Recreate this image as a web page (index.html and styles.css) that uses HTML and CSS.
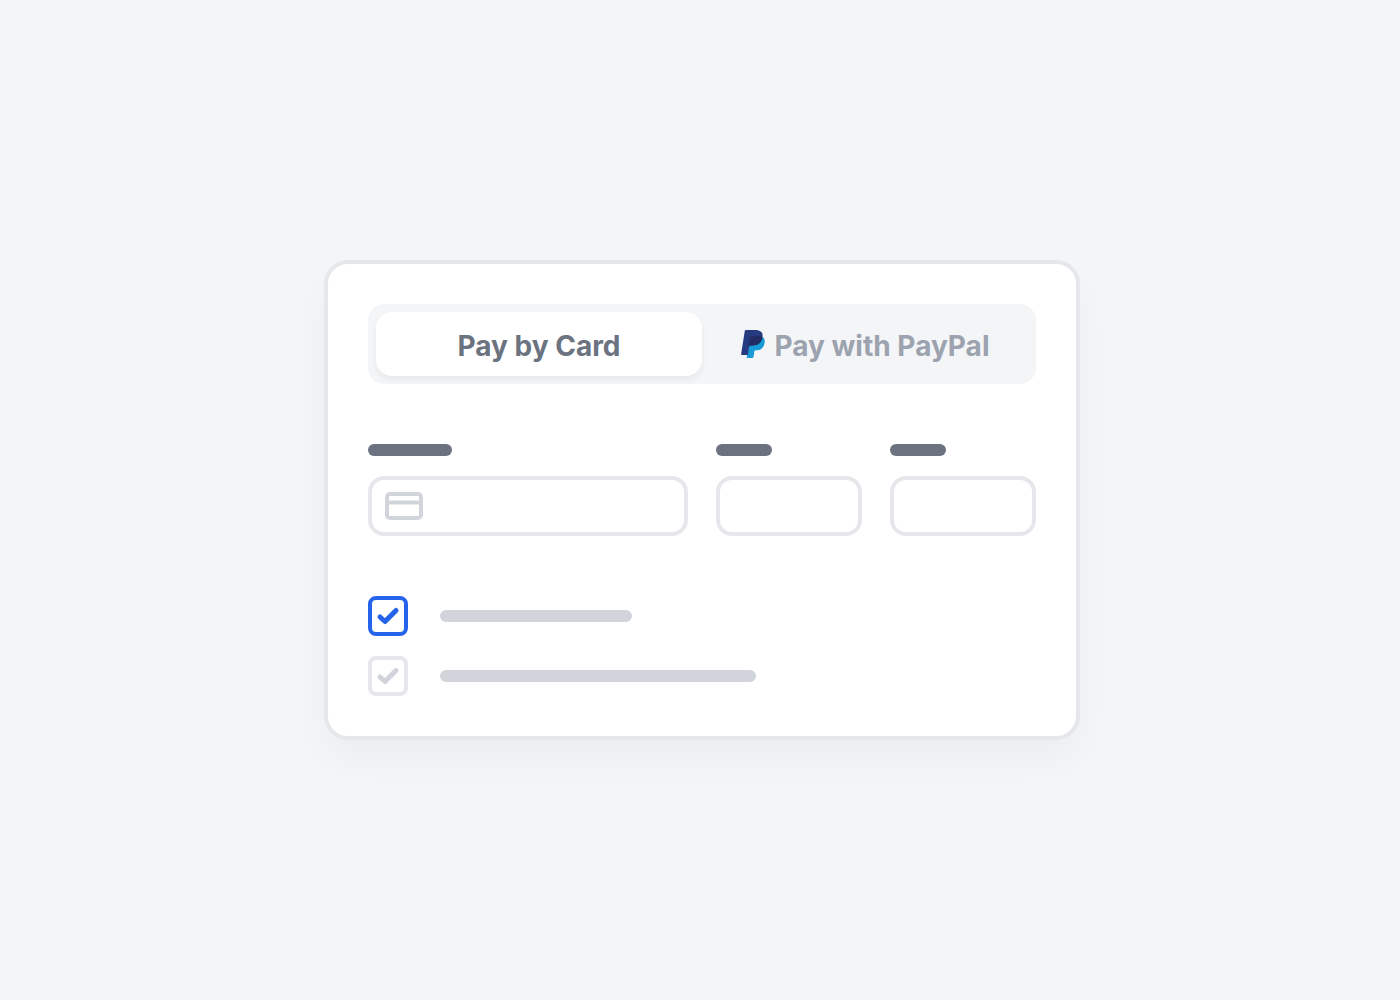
FILE: index.html
```html
<!DOCTYPE html>
<html lang="en">
<head>
<meta charset="utf-8">
<meta name="viewport" content="width=device-width, initial-scale=1">
<title>Payment</title>
<link rel="stylesheet" href="styles.css">
</head>
<body>
<main class="page">
  <form class="card">
    <div class="tabs">
      <button type="button" class="tab tab-active" aria-pressed="true">Pay by Card</button>
      <button type="button" class="tab" aria-pressed="false">
        <svg class="paypal" viewBox="1.8 0 20.4 24" aria-hidden="true">
          <defs>
            <clipPath id="front"><path d="M7.6 21.337H2.47a.641.641 0 0 1-.633-.74L4.944.901C5.026.382 5.474 0 5.998 0h7.46c2.57 0 4.578.543 5.69 1.81 1.01 1.15 1.304 2.42 1.012 4.287-.023.143-.047.288-.077.437-.983 5.05-4.349 6.797-8.647 6.797h-1.7c-.524 0-.968.382-1.05.9z"/></clipPath>
          </defs>
          <path fill="#179bd7" d="M21.222 6.917c-.4-.4-.8-.7-1.2-.9H10.2L8.6 14 6.6 23.35a.56.56 0 0 0 .554.65h4.3c.46 0 .85-.334.922-.788l.816-5.09a.932.932 0 0 1 .923-.788h.4c3.76 0 6.5-1.528 7.36-5.946.36-1.847.174-3.388-.6-4.471z"/>
          <path fill="#253b80" d="M7.6 21.337H2.47a.641.641 0 0 1-.633-.74L4.944.901C5.026.382 5.474 0 5.998 0h7.46c2.57 0 4.578.543 5.69 1.81 1.01 1.15 1.304 2.42 1.012 4.287-.023.143-.047.288-.077.437-.983 5.05-4.349 6.797-8.647 6.797h-1.7c-.524 0-.968.382-1.05.9z"/>
          <path clip-path="url(#front)" fill="#222d65" d="M9.4 6.2c.1-.5.5-.8 1-.8h6c1.8 0 3.4.3 4.6 1.2V14H8z"/>
        </svg>
        Pay with PayPal
      </button>
    </div>

    <div class="fields">
      <div class="field">
        <label class="bar bar-dark bar-long" for="number" aria-label="Card number"></label>
        <div class="control">
          <input class="input" id="number" type="text" inputmode="numeric">
          <svg class="card-icon" viewBox="0 0 38 28" fill="none" stroke="#d1d5db" stroke-width="4" aria-hidden="true">
            <rect x="2" y="2" width="34" height="24" rx="3"/>
            <path d="M2 10.5h34"/>
          </svg>
        </div>
      </div>
      <div class="field">
        <label class="bar bar-dark bar-short" for="expiry" aria-label="Expiry date"></label>
        <input class="input" id="expiry" type="text">
      </div>
      <div class="field">
        <label class="bar bar-dark bar-short" for="cvc" aria-label="Security code"></label>
        <input class="input" id="cvc" type="text">
      </div>
    </div>

    <div class="options">
      <div class="option">
        <span class="check">
          <input class="box" id="save" type="checkbox" checked>
          <svg class="tick" viewBox="0 0 40 40" aria-hidden="true"><path d="M12 21l5 4.5 11-11"/></svg>
        </span>
        <label class="bar bar-light bar-save" for="save" aria-label="Save card"></label>
      </div>
      <div class="option">
        <span class="check">
          <input class="box" id="billing" type="checkbox">
          <svg class="tick" viewBox="0 0 40 40" aria-hidden="true"><path d="M12 21l5 4.5 11-11"/></svg>
        </span>
        <label class="bar bar-light bar-billing" for="billing" aria-label="Use as billing address"></label>
      </div>
    </div>
  </form>
</main>
</body>
</html>
```
FILE: styles.css
```css
* {
  box-sizing: border-box;
}

body {
  margin: 0;
  background: #f3f5f7;
  font-family: Inter, "Liberation Sans", sans-serif;
}

.page {
  display: flex;
  align-items: center;
  justify-content: center;
  min-height: 100vh;
  padding: 24px 20px 24px 24px;
}

.card {
  display: flex;
  flex-direction: column;
  gap: 60px;
  width: 100%;
  max-width: 756px;
  padding: 40px;
  border: 4px solid #e5e7ea;
  border-radius: 24px;
  background: #fff;
  box-shadow: 0 20px 40px -4px rgba(0, 0, 0, 0.04);
}

.tabs {
  display: grid;
  grid-template-columns: 1fr 1fr;
  padding: 8px;
  border-radius: 16px;
  background: #f3f5f7;
}

.tab {
  display: flex;
  align-items: center;
  justify-content: center;
  gap: 10px;
  height: 64px;
  padding: 4px 0 0;
  border: 0;
  border-radius: 16px;
  background: transparent;
  color: #9ca3af;
  font: 700 28px/32px Inter, "Liberation Sans", sans-serif;
}

.tab-active {
  background: #fff;
  color: #6b7280;
  box-shadow: 0 4px 6px rgba(0, 0, 0, 0.05);
}

.paypal {
  width: 24px;
  height: 28px;
  margin-bottom: 4px;
}

.fields {
  display: grid;
  grid-template-columns: 320fr 146fr 146fr;
  gap: 28px;
}

.field {
  display: flex;
  flex-direction: column;
  gap: 20px;
  min-width: 0;
}

.bar {
  display: block;
  height: 12px;
  border-radius: 6px;
}

.bar-dark {
  background: #6b7280;
}

.bar-light {
  background: #d1d5db;
}

.bar-long {
  width: 84px;
}

.bar-short {
  width: 56px;
}

.bar-save {
  width: 192px;
}

.bar-billing {
  width: 316px;
}

.control {
  position: relative;
}

.input {
  display: block;
  width: 100%;
  height: 60px;
  padding: 0 16px;
  border: 4px solid #e5e7eb;
  border-radius: 16px;
  background: #fff;
  color: #6b7280;
  font: 500 24px/32px Inter, "Liberation Sans", sans-serif;
}

.control .input {
  padding-left: 64px;
}

.card-icon {
  position: absolute;
  top: 16px;
  left: 17px;
  width: 38px;
  height: 28px;
}

.options {
  display: flex;
  flex-direction: column;
  gap: 20px;
}

.option {
  display: flex;
  align-items: center;
  gap: 32px;
}

.check {
  position: relative;
  flex: none;
  width: 40px;
  height: 40px;
}

.box {
  display: block;
  width: 40px;
  height: 40px;
  margin: 0;
  border: 4px solid #e5e7eb;
  border-radius: 8px;
  background: #fff;
  appearance: none;
}

.box:checked {
  border-color: #2563eb;
}

.tick {
  position: absolute;
  inset: 0;
  fill: none;
  stroke: #d1d5db;
  stroke-width: 5;
  stroke-linecap: round;
  stroke-linejoin: round;
  pointer-events: none;
}

.box:checked + .tick {
  stroke: #2563eb;
}
```
